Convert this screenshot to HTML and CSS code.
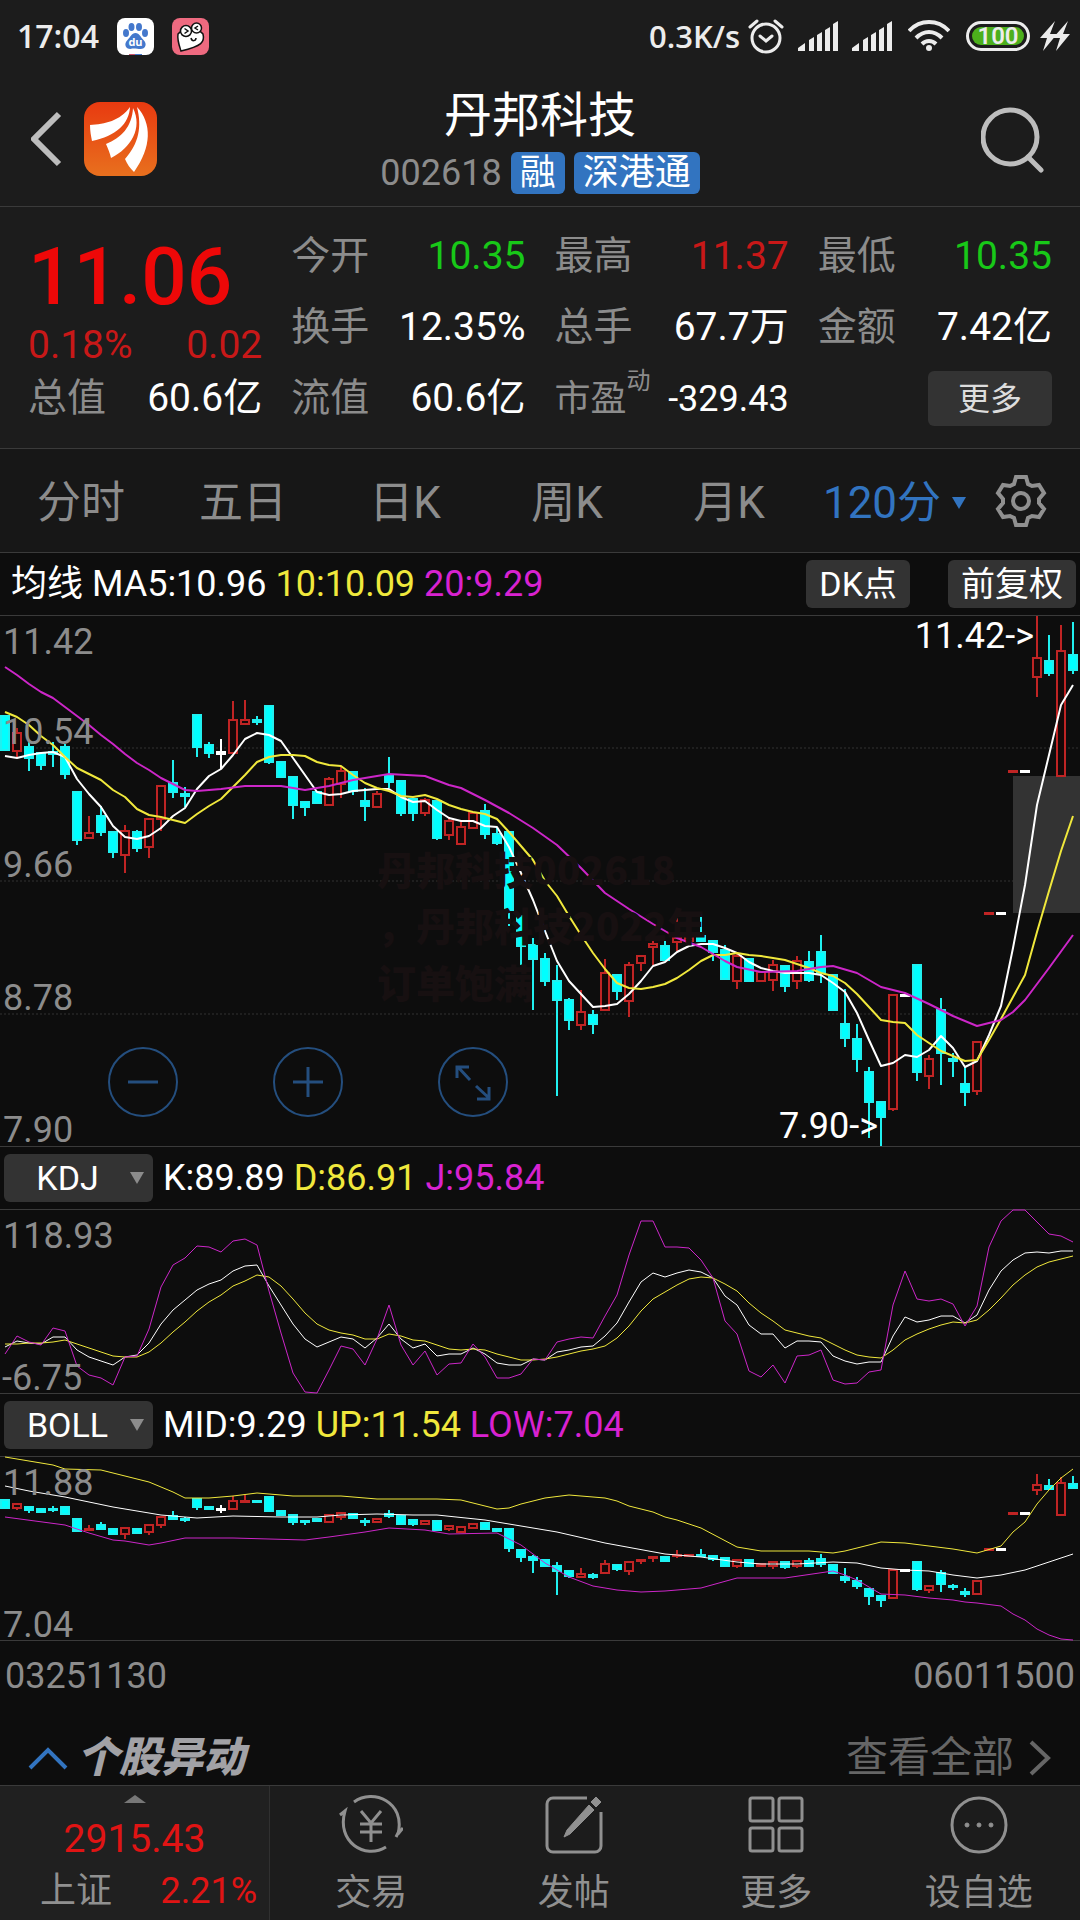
FILE: index.html
```html
<!DOCTYPE html>
<html lang="zh-CN">
<head>
  <meta charset="UTF-8" />
  <meta name="viewport" content="width=device-width, initial-scale=1.0"/>
  <title>丹邦科技 002618</title>
  <link rel="stylesheet" href="styles.css">
</head>
<body>
  <div class="status-bar">
    <span class="time">17:04</span>
    <svg class="app-icon" viewBox="0 0 37 37">
      <rect width="37" height="37" rx="8" fill="#fff"/>
      <g fill="#4478cc">
        <ellipse cx="9" cy="15" rx="3" ry="4"/>
        <ellipse cx="14.5" cy="9" rx="3" ry="4"/>
        <ellipse cx="22" cy="9" rx="3" ry="4"/>
        <ellipse cx="28" cy="15" rx="3" ry="4"/>
        <path d="M18.500 15c4 0 5 4 8 7 4 4 2 9-3 9-3 0-7-1-10 0-5 0-7-5-3-9 3-3 4-7 8-7z"/>
      </g>
      <path d="M12 36h6v1h-6z" fill="#c8506a"/>
      <path d="M18 36h7v1h-7z" fill="#4478cc"/>
      <text x="18.5" y="28" text-anchor="middle" class="du">du</text>
    </svg>
    <svg class="app-icon" viewBox="0 0 37 37">
      <rect width="37" height="37" rx="8" fill="#ee6a80"/>
      <path d="M6 16c4-5 20-7 25 0 2 8-1 12-22 17-2-6-4-11-3-17z" fill="#fff" stroke="#111" stroke-width="1.5"/>
      <circle cx="14" cy="13" r="5.5" fill="#fff" stroke="#111" stroke-width="1.5"/>
      <circle cx="24.5" cy="10" r="5" fill="#fff" stroke="#111" stroke-width="1.5"/>
      <path d="M12.5 10.5l3.5 2.5-3.5 2.5M26 8l-3 2 3 2M19 20c1 4 5 3 5 0" fill="none" stroke="#111" stroke-width="1.5"/>
    </svg>
    <span class="speed">0.3K/s</span>
    <svg width="36" height="36" viewBox="0 0 36 36" fill="none" stroke="#ececec" stroke-width="3" stroke-linecap="round">
      <circle cx="18" cy="20" r="14"/>
      <path d="M12 18l6 5 6-5M2 9l7-6M34 9l-7-6"/>
    </svg>
    <svg class="signal" width="40" height="30" viewBox="0 0 40 30" fill="#ececec">
      <path d="M0 30v-3l7-5v8zM11 30V19l5-3v14zM19 30V14l5-3v19zM27 30V9l5-3v24zM35 30V3l5-3v30z"/>
    </svg>
    <svg class="signal" width="40" height="30" viewBox="0 0 40 30" fill="#ececec">
      <path d="M0 30v-3l7-5v8zM11 30V19l5-3v14zM19 30V14l5-3v19zM27 30V9l5-3v24zM35 30V3l5-3v30z"/>
    </svg>
    <svg class="wifi" width="42" height="32" viewBox="0 0 42 32" fill="none" stroke="#ececec" stroke-width="4">
      <path d="M1 11C12-1 30-1 41 11M8 18c8-8 18-8 26 0M14 24c4-4 10-4 14 0"/>
      <circle cx="21" cy="28" r="3" fill="#ececec" stroke="none"/>
    </svg>
    <span class="battery"><span class="level">100</span></span>
    <svg width="30" height="30" viewBox="0 0 30 30" fill="#ececec">
      <path d="M15 0L0 17h7L3 30l14-17h-7zM28 0L13 17h7l-4 13 14-17h-7z"/>
    </svg>
  </div>

  <header class="header">
    <div class="header-side">
      <button class="icon-button" aria-label="返回">
        <svg width="32" height="56" viewBox="2 0 32 56" fill="none" stroke="#bdbdbd" stroke-width="6">
          <path d="M30 3L5 28l25 25"/>
        </svg>
      </button>
      <svg class="logo" width="73" height="74" viewBox="0 0 73 74">
        <defs>
          <linearGradient id="logo-fill" x1="0" y1="0" x2="0" y2="1">
            <stop offset="0" stop-color="#e83a10"/>
            <stop offset="1" stop-color="#e8701e"/>
          </linearGradient>
        </defs>
        <rect width="73" height="74" rx="16" fill="url(#logo-fill)"/>
        <g fill="#fff">
          <path d="M6 23c15-1 30-4 40-18-1 17-14 29-38 34-1-5-2-10-2-16z"/>
          <path d="M22 42c15-6 26-17 27-36 10 20-2 40-22 50-1-5-3-9-5-14z"/>
          <path d="M53 5c15 16 15 40-3 65-4-4-7-8-9-13 14-16 17-32 12-52z"/>
        </g>
      </svg>
    </div>
    <div class="header-title">
      <h1>丹邦科技</h1>
      <div class="code-row">
        <span class="code">002618</span>
        <span class="tag">融</span>
        <span class="tag">深港通</span>
      </div>
    </div>
    <div class="header-side right">
      <button class="icon-button" aria-label="搜索">
        <svg width="68" height="68" viewBox="0 0 68 68" fill="none" stroke="#bdbdbd" stroke-width="5" stroke-linecap="round">
          <circle cx="29" cy="32" r="27"/>
          <path d="M47 52l13 13"/>
        </svg>
      </button>
    </div>
  </header>

  <section class="quote">
    <div class="price">
      <strong>11.06</strong>
      <div class="change"><span>0.18%</span><span>0.02</span></div>
    </div>
    <div class="cell"><span class="label">今开</span><span class="down">10.35</span></div>
    <div class="cell"><span class="label">最高</span><span class="up">11.37</span></div>
    <div class="cell"><span class="label">最低</span><span class="down">10.35</span></div>
    <div class="cell"><span class="label">换手</span><span>12.35%</span></div>
    <div class="cell"><span class="label">总手</span><span>67.7万</span></div>
    <div class="cell"><span class="label">金额</span><span>7.42亿</span></div>
    <div class="cell"><span class="label">总值</span><span>60.6亿</span></div>
    <div class="cell"><span class="label">流值</span><span>60.6亿</span></div>
    <div class="cell pe"><span class="label">市盈<sup>动</sup></span><span>-329.43</span></div>
    <div class="cell more-cell"><button class="more">更多</button></div>
  </section>

  <nav class="tabs">
    <button class="tab">分时</button>
    <button class="tab">五日</button>
    <button class="tab">日K</button>
    <button class="tab">周K</button>
    <button class="tab">月K</button>
    <button class="tab active">120分
      <svg width="14" height="12" viewBox="0 0 14 12" fill="currentColor"><path d="M0 0h14L7 12z"/></svg>
    </button>
    <button class="icon-button settings" aria-label="设置">
      <svg width="52" height="52" viewBox="0 0 52 52" fill="none" stroke="#909090" stroke-width="4">
        <path d="M19 9l2-7h10l2 7 4 2 7-1 5 8-5 6v4l5 6-5 8-7-1-4 2-2 7H21l-2-7-4-2-7 1-5-8 5-6v-4l-5-6 5-8 7 1z"/>
        <circle cx="26" cy="26" r="8"/>
      </svg>
    </button>
  </nav>

  <main class="charts">
    <div class="legend">
      <p><span>均线 MA5:10.96</span> <span class="yellow">10:10.09</span> <span class="magenta">20:9.29</span></p>
      <div class="legend-buttons">
        <button class="small-button">DK点</button>
        <button class="small-button">前复权</button>
      </div>
    </div>

    <div class="chart price-chart">
      <svg id="price" viewBox="0 0 1080 530"></svg>
      <div class="zoom-buttons">
        <button aria-label="缩小">
          <svg viewBox="0 0 70 70"><circle cx="35" cy="35" r="34"/><path d="M20 35h30"/></svg>
        </button>
        <button aria-label="放大">
          <svg viewBox="0 0 70 70"><circle cx="35" cy="35" r="34"/><path d="M20 35h30M35 20v30"/></svg>
        </button>
        <button aria-label="全屏">
          <svg viewBox="0 0 70 70"><circle cx="35" cy="35" r="34"/><path d="M32 33L20 20M19 31V20h12M38 39l13 12M39 52h12V40"/></svg>
        </button>
      </div>
    </div>

    <div class="legend">
      <div class="picker">
        <select aria-label="副图指标一"><option>KDJ</option><option>MACD</option></select>
      </div>
      <p><span>K:89.89</span> <span class="yellow">D:86.91</span> <span class="magenta">J:95.84</span></p>
    </div>
    <div class="chart"><svg id="kdj" viewBox="0 0 1080 183"></svg></div>

    <div class="legend">
      <div class="picker">
        <select aria-label="副图指标二"><option>BOLL</option><option>RSI</option></select>
      </div>
      <p><span>MID:9.29</span> <span class="yellow">UP:11.54</span> <span class="magenta">LOW:7.04</span></p>
    </div>
    <div class="chart"><svg id="boll" viewBox="0 0 1080 183"></svg></div>

    <div class="dates"><span>03251130</span><span>06011500</span></div>
  </main>

  <section class="news">
    <svg width="40" height="24" viewBox="0 0 40 24" fill="none" stroke="#3274c0" stroke-width="4"><path d="M2 22L20 4l18 18"/></svg>
    <h2>个股异动</h2>
    <a href="#">查看全部
      <svg width="24" height="36" viewBox="0 0 24 36" fill="none" stroke="currentColor" stroke-width="4"><path d="M3 2l17 16L3 34"/></svg>
    </a>
  </section>

  <footer class="bottom-bar">
    <a href="#" class="index">
      <svg width="22" height="8" viewBox="0 0 22 8" fill="#777"><path d="M11 0l11 8H0z"/></svg>
      <span class="index-value">2915.43</span>
      <span class="index-row"><span class="index-name">上证</span><span>2.21%</span></span>
    </a>
    <a href="#" class="nav-item">
      <svg viewBox="0 0 64 60">
        <path d="M15 8C34-6 67 8 59 40l5-6M57 43l2-4"/>
        <path d="M47 53C26 66-3 48 6 17l-5 4"/>
        <path d="M22 17l10 12 10-12M32 29v19M21 30h22M21 38h22"/>
      </svg>
      交易
    </a>
    <a href="#" class="nav-item">
      <svg viewBox="0 0 64 60">
        <path d="M45 4H11a6 6 0 0 0-6 6v42a6 6 0 0 0 6 6h42a6 6 0 0 0 6-6V18"/>
        <path d="M49 8l5-5 5 5-5 5zM47 11l5 5-24 24-6 3 3-7z" class="solid"/>
      </svg>
      发帖
    </a>
    <a href="#" class="nav-item">
      <svg viewBox="0 0 64 60">
        <rect x="6" y="4" width="23" height="23" rx="2"/>
        <rect x="35" y="4" width="23" height="23" rx="2"/>
        <rect x="6" y="34" width="23" height="23" rx="2"/>
        <rect x="35" y="34" width="23" height="23" rx="2"/>
      </svg>
      更多
    </a>
    <a href="#" class="nav-item">
      <svg viewBox="0 0 64 60">
        <circle cx="32" cy="31" r="27"/>
        <g class="solid"><circle cx="20" cy="31" r="2"/><circle cx="32" cy="31" r="2"/><circle cx="44" cy="31" r="2"/></g>
      </svg>
      设自选
    </a>
  </footer>

  <script src="charts.js"></script>
</body>
</html>
```

FILE: styles.css
```css
* {
  box-sizing: border-box;
  margin: 0;
  padding: 0;
}

body {
  display: flex;
  flex-direction: column;
  min-height: 100vh;
  background: #0d0d0d;
  color: #fff;
  font-family: Roboto, "Noto Sans CJK SC", sans-serif;
  font-size: 36px;
  line-height: 1;
}

button,
select {
  font: inherit;
  color: inherit;
  background: none;
  border: none;
  cursor: pointer;
}

a {
  color: inherit;
  text-decoration: none;
}

svg {
  display: block;
}

.up {
  color: #c81818;
}

.down {
  color: #18c818;
}

.yellow {
  color: #f0e83c;
}

.magenta {
  color: #d822d0;
}

/* status bar */
.status-bar {
  display: flex;
  align-items: center;
  height: 72px;
  padding: 0 10px 0 17px;
  background: #1c1c1c;
  color: #ececec;
  font-family: "Open Sans", sans-serif;
  font-size: 32px;
  font-weight: 600;
}

.app-icon {
  width: 37px;
  height: 37px;
  margin-left: 18px;
}

.du {
  font-size: 11px;
  font-weight: 700;
  fill: #fff;
}

.speed {
  margin-left: auto;
  padding-right: 8px;
  font-size: 31px;
}

.signal {
  margin-left: 14px;
}

.wifi {
  margin-left: 16px;
}

.battery {
  margin: 0 10px 0 16px;
  padding: 3px;
  border: 3px solid #ececec;
  border-radius: 16px;
}

.level {
  display: block;
  width: 52px;
  border-radius: 10px;
  background: #4caf1c;
  font-family: Roboto, sans-serif;
  font-size: 24px;
  line-height: 18px;
  text-align: center;
}

/* title */
.header {
  display: flex;
  align-items: center;
  height: 135px;
  padding: 0 31px;
  background: #1c1c1c;
  border-bottom: 1px solid #3a3a3a;
}

.header-side {
  display: flex;
  flex: 1;
  align-items: center;
  gap: 21px;
}

.header-side.right {
  justify-content: flex-end;
}

.header-title {
  padding-top: 7px;
  text-align: center;
}

.header h1 {
  margin-bottom: 12px;
  font-size: 48px;
  font-weight: 400;
}

.code-row {
  display: flex;
  align-items: center;
  gap: 9px;
}

.code {
  color: #8c8c8c;
}

.tag {
  padding: 0 9px;
  border-radius: 6px;
  background: #3274c0;
  line-height: 42px;
}

/* quote panel */
.quote {
  display: grid;
  grid-template-columns: repeat(4, 1fr);
  grid-auto-rows: 71px;
  column-gap: 29px;
  padding: 14px 28px 14px;
  background: #1c1c1c;
  border-bottom: 1px solid #3a3a3a;
  font-size: 39px;
}

.price {
  grid-row: span 2;
  display: flex;
  flex-direction: column;
  color: #c81818;
}

.price strong {
  padding-top: 16px;
  color: #ee0808;
  font-size: 80px;
  font-weight: 500;
}

.change {
  display: flex;
  justify-content: space-between;
  padding-top: 9px;
}

.cell {
  display: flex;
  align-items: center;
  justify-content: space-between;
  white-space: nowrap;
}

.label {
  color: #8c8c8c;
}

.pe .label {
  font-size: 36px;
}

.pe sup {
  font-size: 24px;
  line-height: 0;
  vertical-align: 22px;
}

.pe span:last-child {
  font-size: 36px;
}

.more-cell {
  justify-content: flex-end;
}

.more {
  width: 124px;
  height: 55px;
  border-radius: 6px;
  background: #333;
  color: #ddd;
  font-size: 32px;
}

/* period tabs */
.tabs {
  display: flex;
  align-items: center;
  height: 104px;
  background: #171717;
  border-bottom: 1px solid #3a3a3a;
  color: #8c8c8c;
  font-size: 44px;
}

.tab {
  flex: 0 0 15%;
  padding-top: 4px;
  white-space: nowrap;
}

.tab.active {
  flex: 1;
  display: flex;
  align-items: center;
  justify-content: center;
  gap: 11px;
  color: #3274c0;
}

.settings {
  padding: 0 33px 0 16px;
}

/* charts */
.charts {
  flex: 1;
}

.legend {
  display: flex;
  align-items: center;
  gap: 10px;
  height: 62px;
  padding: 0 4px;
}

.legend p:first-child {
  padding-left: 7px;
}

.legend-buttons {
  display: flex;
  gap: 38px;
  margin-left: auto;
}

.small-button,
.picker select {
  height: 48px;
  padding: 0 13px;
  border-radius: 6px;
  background: #333;
  font-size: 34px;
}

.picker {
  position: relative;
}

.picker select {
  width: 149px;
  padding: 0 22px 0 0;
  appearance: none;
  text-align: center;
  text-align-last: center;
}

.picker::after {
  content: '';
  position: absolute;
  top: 18px;
  right: 9px;
  border: 7px solid transparent;
  border-top: 12px solid #8c8c8c;
  border-bottom: none;
  pointer-events: none;
}

.chart {
  position: relative;
  border-top: 1px solid #3a3a3a;
  border-bottom: 1px solid #3a3a3a;
}

.chart > svg {
  width: 100%;
  overflow: visible;
}

.axis {
  fill: #8c8c8c;
}

.mark {
  fill: #fff;
}

.watermark {
  fill: #171011;
  font-family: "Noto Sans CJK SC", sans-serif;
  font-size: 39px;
  font-weight: 900;
}

.grid {
  stroke: #333;
  stroke-dasharray: 2 2;
}

.gap {
  fill: #333;
}

.line {
  fill: none;
  stroke-width: 1;
  stroke-linejoin: round;
}

.bold .line {
  stroke-width: 2;
}

.line.w {
  stroke: #fff;
}

.line.y {
  stroke: #f0e83c;
}

.line.m {
  stroke: #cc26c8;
}

.candle {
  stroke-width: 2;
}

.candle.u {
  fill: #160808;
  stroke: #c02424;
}

.candle.d {
  fill: #00ffff;
  stroke: #20f0f0;
}

.candle.w {
  fill: #fff;
  stroke: #fff;
}

.zoom-buttons {
  position: absolute;
  left: 10%;
  bottom: 29px;
  display: flex;
  gap: 95px;
}

.zoom-buttons svg {
  width: 70px;
  height: 70px;
  fill: none;
  stroke: #244e7e;
  stroke-width: 2;
}

.zoom-buttons path {
  stroke-width: 3;
}

.dates {
  display: flex;
  justify-content: space-between;
  padding: 17px 5px;
  color: #8c8c8c;
}

/* news */
.news {
  display: flex;
  align-items: center;
  gap: 9px;
  height: 60px;
  padding: 4px 28px 0;
  border-bottom: 1px solid #3a3a3a;
  font-size: 42px;
}

.news h2 {
  color: #a2a2a6;
  font-size: 42px;
  font-style: italic;
  font-weight: 900;
}

.news a {
  display: flex;
  align-items: center;
  gap: 14px;
  margin-left: auto;
  color: #666;
}

/* bottom bar */
.bottom-bar {
  display: flex;
  height: 134px;
  background: #1c1c1c;
  color: #909090;
}

.index {
  flex: 1;
  display: flex;
  flex-direction: column;
  align-items: center;
  padding-top: 9px;
  background: #202020;
  border-right: 1px solid #303030;
  color: #e01414;
}

.index-value {
  margin: 17px 0 14px;
  font-size: 39px;
}

.index-row {
  display: flex;
  justify-content: space-between;
  align-self: stretch;
  padding: 0 12px 0 40px;
}

.index-name {
  color: #909090;
}

.nav-item {
  flex: 0 0 18.75%;
  display: flex;
  flex-direction: column;
  align-items: center;
  gap: 21px;
  padding-top: 8px;
}

.nav-item svg {
  width: 64px;
  height: 60px;
  fill: none;
  stroke: #909090;
  stroke-width: 3;
}

.nav-item .solid {
  fill: #909090;
  stroke-width: 1;
}
```

FILE: charts.js
```js
const STEP = 12;
const FIRST = 5;

// [type, high, body top, body bottom, low], u = up, d = down, w = unchanged
const candles = [
  ['d', 100, 100, 134, 134], ['u', 112, 117, 135, 141], ['d', 126, 131, 142, 155],
  ['d', 137, 137, 149, 154], ['d', 126, 136, 138, 151], ['d', 128, 131, 158, 163],
  ['d', 176, 176, 224, 229], ['u', 200, 217, 222, 222], ['d', 190, 200, 216, 220],
  ['d', 216, 216, 236, 242], ['u', 209, 215, 239, 257], ['d', 214, 216, 232, 236],
  ['u', 203, 203, 231, 242], ['u', 170, 170, 203, 215], ['d', 144, 167, 176, 182],
  ['d', 171, 178, 180, 191], ['d', 99, 99, 131, 141], ['d', 126, 129, 137, 142],
  ['w', 123, 136, 138, 153], ['u', 85, 104, 137, 137], ['u', 84, 104, 108, 108],
  ['d', 100, 104, 106, 109], ['d', 90, 90, 146, 148], ['d', 146, 146, 161, 161],
  ['d', 161, 161, 189, 203], ['d', 186, 186, 191, 200], ['d', 175, 176, 187, 188],
  ['u', 161, 163, 189, 189], ['u', 151, 155, 168, 182], ['d', 155, 156, 175, 179],
  ['d', 172, 185, 190, 205], ['u', 175, 178, 191, 191], ['d', 141, 159, 166, 172],
  ['d', 165, 165, 197, 200], ['d', 183, 183, 197, 205], ['u', 182, 184, 197, 200],
  ['d', 185, 185, 222, 224], ['u', 202, 205, 219, 224], ['u', 206, 211, 228, 228],
  ['u', 196, 197, 212, 212], ['d', 188, 195, 218, 223], ['d', 212, 218, 227, 229],
  ['d', 216, 216, 294, 310], ['d', 300, 300, 330, 349], ['d', 322, 329, 343, 394],
  ['d', 337, 343, 365, 370], ['d', 349, 365, 384, 480], ['d', 382, 384, 404, 414],
  ['u', 374, 396, 409, 414], ['d', 394, 399, 408, 418], ['u', 343, 357, 394, 394],
  ['d', 358, 359, 375, 384], ['u', 346, 349, 385, 401], ['u', 339, 340, 347, 355],
  ['u', 325, 328, 331, 349], ['d', 325, 330, 344, 344], ['u', 302, 322, 326, 335],
  ['u', 321, 322, 325, 325], ['d', 298, 320, 325, 325], ['d', 325, 325, 336, 345],
  ['d', 329, 334, 363, 363], ['u', 337, 340, 365, 373], ['d', 343, 343, 365, 366],
  ['u', 356, 356, 365, 365], ['u', 344, 349, 364, 375], ['d', 349, 350, 370, 376],
  ['u', 340, 345, 365, 373], ['d', 335, 346, 364, 366], ['d', 319, 336, 357, 367],
  ['d', 359, 359, 394, 394], ['d', 373, 408, 422, 431], ['d', 408, 423, 443, 456],
  ['d', 451, 456, 486, 522], ['d', 486, 486, 501, 530], ['u', 379, 379, 493, 495],
  ['w', 379, 379, 380, 380], ['d', 349, 349, 456, 465], ['u', 439, 443, 460, 473],
  ['d', 382, 394, 437, 469], ['d', 437, 443, 445, 461], ['d', 451, 468, 476, 490],
  ['u', 426, 426, 475, 479], ['u', 297, 297, 298, 298], ['w', 297, 297, 298, 298],
  ['u', 155, 155, 156, 156], ['w', 155, 155, 156, 156], ['u', 0, 42, 61, 81],
  ['d', 19, 45, 57, 60], ['u', 9, 35, 160, 160], ['d', 6, 39, 54, 58]
];

const ma5 = [140, 142, 139, 137, 136, 141, 163, 178, 191, 210, 221, 223, 220, 212, 200, 192, 173, 160, 153, 139,
  123, 117, 119, 125, 142, 159, 176, 179, 178, 175, 174, 173, 173, 181, 186, 185, 194, 202, 205, 205,
  210, 211, 231, 257, 284, 315, 345, 365, 378, 391, 390, 388, 378, 365, 350, 346, 336, 330, 328, 328,
  332, 337, 346, 352, 355, 357, 357, 357, 359, 367, 376, 397, 424, 450, 447, 439, 441, 434, 420, 432,
  451, 445, 419, 390, 332, 269, 189, 139, 89, 69];

const ma10 = [96, 101, 109, 120, 129, 141, 152, 158, 164, 174, 181, 193, 199, 201, 204, 207, 198, 190, 183, 171,
  159, 146, 141, 139, 139, 140, 146, 149, 150, 159, 167, 172, 175, 180, 181, 179, 183, 189, 193, 196,
  198, 203, 216, 230, 244, 265, 280, 300, 319, 337, 353, 367, 372, 373, 371, 368, 362, 354, 345, 339,
  339, 337, 339, 340, 342, 344, 348, 352, 357, 360, 367, 378, 391, 404, 406, 407, 419, 427, 435, 440,
  445, 444, 424, 403, 381, 359, 316, 275, 235, 200];

// sparse series: [candle index, y]
const ma20 = [[0, 51], [1, 59], [2, 68], [3, 76], [4, 82], [5, 91], [6, 100], [7, 109], [8, 119], [9, 128],
  [10, 138], [11, 147], [12, 154], [13, 162], [14, 168], [15, 174], [16, 175], [18, 173], [20, 170], [23, 170],
  [25, 174], [27, 170], [29, 164], [30, 162], [32, 158], [35, 160], [37, 169], [38, 172], [40, 184], [42, 197],
  [44, 212], [46, 229], [48, 252], [50, 277], [52, 293], [54, 308], [56, 322], [58, 331], [60, 345], [61, 351],
  [63, 356], [66, 355], [68, 351], [69, 350], [71, 357], [73, 371], [75, 377], [77, 388], [79, 400], [81, 410],
  [83, 404], [84, 396], [85, 384], [87, 352], [89, 319]];

const k = [137, 131, 133, 134, 127, 127, 140, 147, 151, 155, 147, 145, 133, 114, 100, 90, 80, 74, 70, 61,
  56, 55, 76, 95, 114, 129, 137, 132, 127, 129, 138, 128, 114, 129, 138, 134, 146, 144, 144, 138,
  144, 153, 155, 155, 149, 150, 142, 140, 137, 136, 126, 113, 92, 72, 63, 67, 63, 60, 62, 68,
  86, 95, 115, 124, 124, 138, 131, 131, 132, 146, 151, 154, 152, 152, 126, 107, 112, 110, 106, 106,
  113, 105, 80, 61, 50, 43, 42, 43, 41, 41];

const d = [134, 134, 133, 133, 132, 130, 134, 138, 142, 146, 147, 147, 142, 133, 122, 112, 101, 92, 85, 76,
  71, 65, 67, 76, 89, 103, 114, 120, 123, 125, 129, 129, 124, 126, 130, 131, 135, 139, 140, 139,
  140, 144, 147, 150, 150, 149, 147, 144, 141, 139, 136, 128, 116, 101, 89, 82, 75, 69, 67, 68,
  74, 81, 93, 103, 111, 120, 123, 126, 128, 134, 140, 145, 147, 148, 140, 130, 124, 119, 115, 112,
  113, 110, 100, 88, 75, 65, 57, 52, 49, 46];

const j = [144, 126, 132, 135, 118, 121, 156, 165, 168, 175, 147, 146, 119, 77, 55, 48, 36, 37, 42, 31,
  29, 35, 81, 123, 163, 182, 183, 160, 136, 139, 155, 129, 95, 135, 155, 141, 165, 154, 153, 134,
  147, 168, 168, 164, 149, 150, 132, 129, 127, 128, 106, 85, 45, 11, 11, 37, 37, 38, 50, 68,
  111, 124, 161, 167, 155, 173, 146, 145, 140, 170, 174, 173, 162, 160, 95, 61, 89, 91, 89, 94,
  116, 96, 37, 11, 0, 0, 12, 24, 26, 32];

const up = [[0, 0], [3, 6], [4, 8], [5, 12], [8, 13], [9, 16], [10, 19], [12, 25], [14, 35], [15, 41], [17, 41],
  [19, 39], [21, 36], [24, 39], [28, 39], [31, 42], [36, 42], [38, 43], [41, 52], [42, 51], [43, 47], [45, 41],
  [47, 38], [50, 41], [51, 44], [52, 49], [54, 55], [55, 60], [56, 63], [58, 71], [61, 90], [63, 94], [67, 94],
  [69, 96], [70, 94], [73, 85], [75, 86], [77, 89], [79, 92], [81, 96], [83, 89], [84, 75], [85, 65], [86, 47],
  [87, 33], [88, 21], [89, 12]];

const mid = [[0, 29], [2, 34], [5, 40], [9, 50], [13, 58], [16, 61], [19, 59], [23, 60], [26, 60], [28, 58],
  [31, 57], [34, 58], [36, 58], [40, 63], [42, 67], [44, 71], [46, 75], [50, 86], [55, 97], [58, 100], [61, 105],
  [63, 107], [66, 107], [69, 105], [71, 106], [73, 111], [75, 113], [77, 114], [79, 118], [81, 121], [83, 118],
  [85, 113], [89, 97]];

const low = [[0, 60], [5, 68], [7, 76], [9, 83], [10, 84], [12, 88], [13, 86], [15, 81], [19, 81], [22, 82],
  [25, 83], [27, 80], [30, 75], [32, 71], [35, 73], [37, 77], [41, 76], [43, 88], [44, 97], [45, 106], [47, 120],
  [49, 129], [51, 133], [53, 135], [55, 134], [58, 131], [61, 121], [65, 121], [69, 114], [70, 118], [71, 123],
  [73, 137], [75, 138], [77, 141], [79, 143], [80, 145], [81, 146], [83, 149], [84, 157], [85, 163], [86, 172],
  [87, 178], [88, 182], [89, 183]];

function line(points, color) {
  const coords = points.map((p, i) => {
    const [index, y] = Array.isArray(p) ? p : [i, p];
    return `${FIRST + index * STEP},${y}`;
  });
  return `<polyline class="line ${color}" points="${coords.join(' ')}"/>`;
}

function drawCandles(scale, offset) {
  return candles.map(([type, ...values], i) => {
    const [high, top, bottom, last] = values.map(v => Math.round(v * scale + offset));
    const x = FIRST + i * STEP;
    const height = Math.max(bottom - top, 1);
    return `<g class="candle ${type}">
      <path d="M${x} ${high}V${top}M${x} ${bottom}V${last}"/>
      <rect x="${x - 4}" y="${top}" width="8" height="${height}"/>
    </g>`;
  }).join('');
}

function label(x, y, text, cls = 'axis', anchor = 'start') {
  return `<text class="${cls}" x="${x}" y="${y}" text-anchor="${anchor}">${text}</text>`;
}

document.getElementById('price').innerHTML = `
  <path class="grid" d="M0 132H1080M0 265H1080M0 398H1080"/>
  <rect class="gap" x="1013" y="160" width="67" height="137"/>
  ${drawCandles(1, 0)}
  <g class="bold">${line(ma5, 'w')}${line(ma10, 'y')}${line(ma20, 'm')}</g>
  ${label(3, 38, '11.42')}
  ${label(3, 128, '10.54')}
  ${label(3, 261, '9.66')}
  ${label(3, 394, '8.78')}
  ${label(3, 526, '7.90')}
  ${label(1034, 32, '11.42-&gt;', 'mark', 'end')}
  ${label(878, 522, '7.90-&gt;', 'mark', 'end')}
  ${label(377, 269, '丹邦科技002618', 'watermark')}
  ${label(377, 325, '，丹邦科技2022年', 'watermark')}
  ${label(377, 382, '订单饱满', 'watermark')}
`;

document.getElementById('kdj').innerHTML = `
  ${line(k, 'w')}${line(d, 'y')}${line(j, 'm')}
  ${label(3, 38, '118.93')}
  ${label(2, 180, '-6.75')}
`;

// same candles on the 7.04 - 11.88 axis
document.getElementById('boll').innerHTML = `
  ${drawCandles(0.251, 17.4)}
  ${line(mid, 'w')}${line(up, 'y')}${line(low, 'm')}
  ${label(3, 38, '11.88')}
  ${label(3, 180, '7.04')}
`;
```
